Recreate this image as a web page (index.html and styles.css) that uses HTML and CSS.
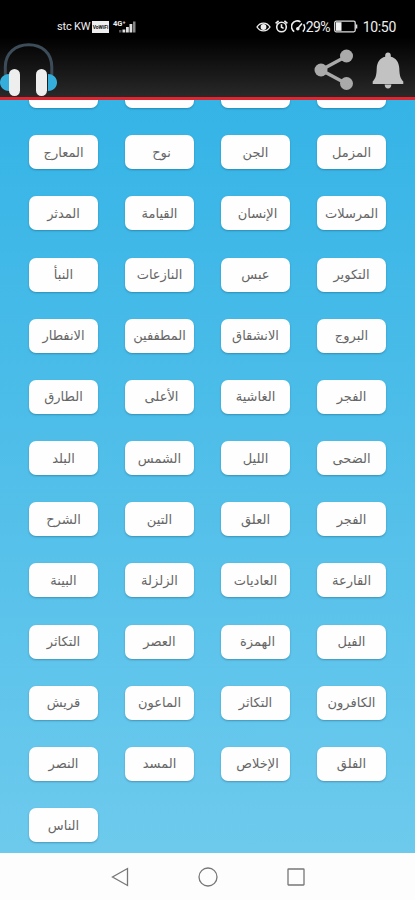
FILE: index.html
```html
<!DOCTYPE html>
<html lang="ar">
<head>
  <meta charset="UTF-8">
  <meta name="viewport" content="width=device-width, initial-scale=1.0">
  <title>القرآن الكريم</title>
  <link rel="stylesheet" href="styles.css">
</head>
<body>
  <header>
    <div class="status-bar">
      <div class="status-left">
        <span class="carrier">stc KW</span>
        <span class="vowifi">VoWiFi</span>
        <span class="network">4G⁺</span>
        <svg class="signal" width="18" height="13" viewBox="0 0 18 13">
          <path d="M0 10h2.500v2.500h-2.500z" fill="#555"/>
          <path d="M3.500 9.500h2.800v3h-2.800zM7 7h2.800v5.500h-2.800zM10.500 4h2.800v8.500h-2.800z" fill="#e0e0e0"/>
          <path d="M14 1.500h2.500v11h-2.500z" fill="#888"/>
        </svg>
      </div>
      <div class="status-right">
        <svg width="15" height="12" viewBox="0 0 15 12" fill="none" stroke="#eee" stroke-width="1.4">
          <path d="M1 6C4.200 0.800 10.800 0.800 14 6C10.800 11.200 4.200 11.200 1 6z"/>
          <circle cx="7.500" cy="6" r="2.200" fill="#eee"/>
        </svg>
        <svg class="alarm" width="13" height="13" viewBox="0 0 13 13" fill="none" stroke="#eee" stroke-width="1.600">
          <circle cx="6.500" cy="7" r="4.800"/>
          <path d="M0.600 3.400L3.600 0.800M12.400 3.400L9.400 0.800M6.500 4.300V7.200L8.600 8.400"/>
        </svg>
        <svg class="gauge" width="15" height="13" viewBox="0 0 15 13" fill="none" stroke="#eee" stroke-width="1.600">
          <path d="M3.200 11.600A5.600 5.600 0 0 1 9.500 1.800M12.600 4.300A5.600 5.600 0 0 1 11.800 11.600M6.500 8.800L11 3.600"/>
          <circle cx="6.800" cy="8.800" r="1" fill="#eee"/>
        </svg>
        <span class="percent">29%</span>
        <svg class="battery" width="25" height="13" viewBox="0 0 25 13">
          <rect x="0.700" y="1.200" width="20.500" height="10.600" rx="1.500" fill="none" stroke="#ddd" stroke-width="1.300"/>
          <rect x="2" y="2.200" width="5.500" height="8.600" fill="#f4f4f4"/>
          <path d="M22.500 4.500v4" stroke="#ddd" stroke-width="1.600"/>
        </svg>
        <span class="clock">10:50</span>
      </div>
    </div>
    <div class="toolbar">
      <svg class="logo" width="57" height="54" viewBox="0 0 57 54">
        <path d="M5.300 32V24C5.300 10 15.500 1.700 28.700 1.700S51.800 10 51.800 24V32" fill="none" stroke="#3c4c58" stroke-width="3"/>
        <path d="M9 31C3 31 0 35.500 0 39.500S3 48 9 48zM48 31C54 31 57 35.500 57 39.500S54 48 48 48z" fill="#36aedc"/>
        <rect x="9" y="26" width="11" height="27" rx="5.500" fill="#eee"/>
        <rect x="36" y="26" width="11" height="27" rx="5.500" fill="#eee"/>
      </svg>
      <div class="actions">
        <svg width="40" height="42" viewBox="0 0 40 42" fill="#aaa">
          <path d="M33 7L7 21L33 35" fill="none" stroke="#aaa" stroke-width="3.400"/>
          <circle cx="32.500" cy="7" r="6.500"/>
          <circle cx="7" cy="21" r="6.500"/>
          <circle cx="32.500" cy="34.500" r="6.500"/>
        </svg>
        <svg class="bell" width="32" height="37" viewBox="0 0 32 37" fill="#c2c2c2">
          <path d="M16 0.500C17.700 0.500 18.800 1.700 18.800 3.500V4.700C24 6 27 10 27.300 16.500C27.500 22.500 28 26 31.300 29.500V32H0.700V29.500C4 26 4.500 22.500 4.700 16.500C5 10 8 6 13.200 4.700V3.500C13.200 1.700 14.300 0.500 16 0.500z"/>
          <path d="M12.700 32.500H19.300C19.300 35 18 36.500 16 36.500S12.700 35 12.700 32.500z"/>
        </svg>
      </div>
    </div>
  </header>

  <main>
    <div class="surahs">
      <button></button>
      <button></button>
      <button></button>
      <button></button>
      <button>المعارج</button>
      <button class="shift">نوح</button>
      <button>الجن</button>
      <button>المزمل</button>
      <button>المدثر</button>
      <button>القيامة</button>
      <button class="shift">الإنسان</button>
      <button>المرسلات</button>
      <button>النبأ</button>
      <button>النازعات</button>
      <button>عبس</button>
      <button>التكوير</button>
      <button>الانفطار</button>
      <button>المطففين</button>
      <button>الانشقاق</button>
      <button>البروج</button>
      <button>الطارق</button>
      <button class="shift">الأعلى</button>
      <button>الغاشية</button>
      <button>الفجر</button>
      <button>البلد</button>
      <button>الشمس</button>
      <button>الليل</button>
      <button>الضحى</button>
      <button>الشرح</button>
      <button>التين</button>
      <button>العلق</button>
      <button>الفجر</button>
      <button>البينة</button>
      <button>الزلزلة</button>
      <button>العاديات</button>
      <button>القارعة</button>
      <button>التكاثر</button>
      <button>العصر</button>
      <button class="shift">الهمزة</button>
      <button>الفيل</button>
      <button>قريش</button>
      <button>الماعون</button>
      <button>التكاثر</button>
      <button>الكافرون</button>
      <button>النصر</button>
      <button>المسد</button>
      <button class="shift">الإخلاص</button>
      <button>الفلق</button>
      <button>الناس</button>
    </div>
  </main>

  <nav>
    <svg width="18" height="20" viewBox="0 0 18 20"><path d="M16.500 1.500V18.500L1.500 10z"/></svg>
    <svg width="20" height="20" viewBox="0 0 20 20"><circle cx="10" cy="10" r="9"/></svg>
    <svg width="18" height="18" viewBox="0 0 18 18"><rect x="1" y="1" width="16" height="16" rx="0.500"/></svg>
  </nav>
</body>
</html>
```

FILE: styles.css
```css
* {
  margin: 0;
  padding: 0;
  box-sizing: border-box;
}

body {
  font-family: 'DejaVu Sans', sans-serif;
  width: 415px;
  height: 900px;
  display: flex;
  flex-direction: column;
  overflow: hidden;
}

svg {
  display: block;
  flex-shrink: 0;
}

header {
  height: 100px;
  background: linear-gradient(#000 0%, #000 38%, #292929 100%);
  border-bottom: 3px solid #df2630;
  color: #eee;
}

/* Status bar */
.status-bar {
  height: 43px;
  padding: 10px 19px 0 57px;
  display: flex;
  justify-content: space-between;
  align-items: center;
  font-family: Roboto, sans-serif;
}

.status-left, .status-right {
  display: flex;
  align-items: center;
}

.carrier {
  width: 35px;
  font-size: 11px;
  letter-spacing: -0.2px;
  white-space: nowrap;
}

.vowifi {
  width: 17px;
  height: 12px;
  background: #eee;
  color: #111;
  font-size: 5px;
  font-weight: 700;
  line-height: 12px;
  text-align: center;
}

.network {
  margin-left: 4px;
  width: 9px;
  font-size: 7.5px;
  font-weight: 700;
  line-height: 8px;
  align-self: flex-start;
  white-space: nowrap;
}

.signal {
  margin-left: -3px;
}

.alarm {
  margin-left: 4px;
}

.gauge {
  margin-left: 3px;
}

.percent {
  width: 27px;
  font-size: 14px;
  letter-spacing: -0.5px;
}

.battery {
  margin-left: 1px;
}

.clock {
  margin-left: 4px;
  font-size: 14px;
  letter-spacing: -0.3px;
}

/* Toolbar */
.toolbar {
  height: 54px;
  padding-right: 11px;
  display: flex;
  justify-content: space-between;
  align-items: center;
}

.actions {
  display: flex;
  align-items: center;
  gap: 18px;
}

/* Surah list */
main {
  flex: 1;
  min-height: 0;
  padding: 0 29px 11px 29px;
  display: flex;
  align-items: flex-end;
  overflow: hidden;
  background: linear-gradient(#35b4e6, #6dcaed);
}

.surahs {
  width: 100%;
  display: grid;
  grid-template-columns: repeat(4, 69px);
  justify-content: space-between;
  grid-auto-rows: 34px;
  row-gap: 27.16px;
}

.surahs button {
  border: none;
  border-radius: 7px;
  background: #fefefe;
  box-shadow: 0 1px 2px rgba(0, 60, 90, 0.35);
  color: #666;
  font-family: inherit;
  font-size: 13px;
  direction: rtl;
  white-space: nowrap;
}

.surahs .shift {
  padding-left: 4px;
}

/* Navigation bar */
nav {
  height: 47px;
  display: flex;
  justify-content: center;
  align-items: center;
  gap: 69px;
  background: #fdfdfd;
}

nav svg {
  fill: none;
  stroke: #777;
  stroke-width: 1.3;
}
```
